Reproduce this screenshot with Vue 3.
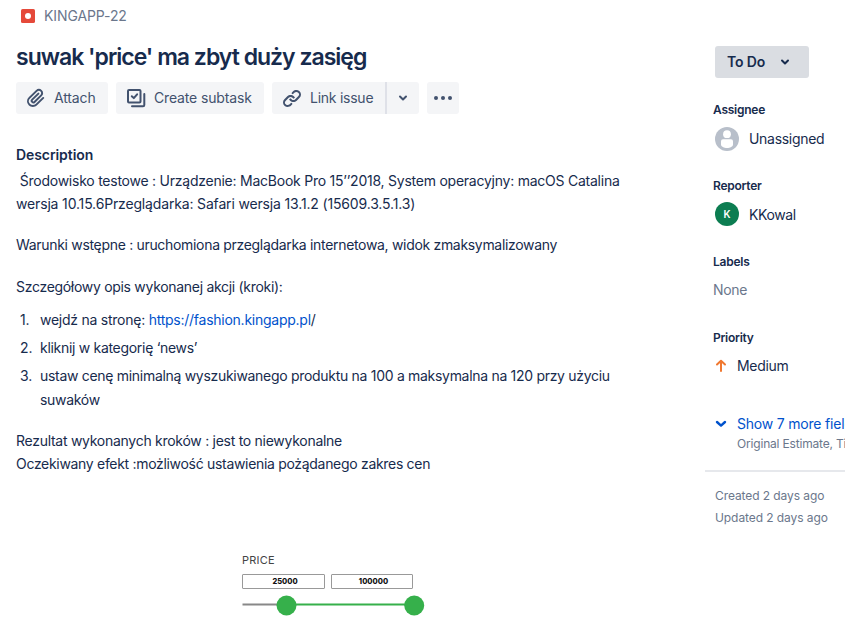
<script setup>
const steps = [
  { text: 'wejdź na stronę: ', link: 'https://fashion.kingapp.pl', tail: '/', cls: 'step-a' },
  { text: 'kliknij w kategorię ‘news’', cls: 'step-b' },
  { text: 'ustaw cenę minimalną wyszukiwanego produktu na 100 a maksymalna na 120 przy użyciu suwaków', cls: 'step-c' },
]
</script>

<template>
  <div class="issue">
    <main class="main">
      <div class="crumb">
        <svg width="14" height="14" viewBox="0 0 14 14"><rect width="14" height="14" rx="1.6" fill="#e5493a" /><circle cx="7" cy="7" r="3" fill="#fff" /></svg>
        <span>KINGAPP-22</span>
      </div>
      <h1>suwak 'price' ma zbyt duży zasięg</h1>
      <div class="toolbar">
        <button class="btn attach">
          <svg width="24" height="24" viewBox="0 0 24 24" fill="#42526e"><path d="M11.643 17.965c-1.53 1.495-4.016 1.496-5.542.004a3.773 3.773 0 0 1 .002-5.412l7.147-6.985a2.316 2.316 0 0 1 3.237.003c.893.873.895 2.282.004 3.153l-6.703 6.55a.653.653 0 0 1-.914-.008.62.62 0 0 1 .001-.902l6.229-6.087a.941.941 0 0 0 0-1.353.995.995 0 0 0-1.384 0l-6.23 6.087a2.502 2.502 0 0 0 .001 3.607 2.643 2.643 0 0 0 3.683.009l6.703-6.55a4.074 4.074 0 0 0-.003-5.859 4.306 4.306 0 0 0-6.002-.003l-7.148 6.985a5.655 5.655 0 0 0-.001 8.118c2.29 2.239 6.015 2.238 8.311-.005l6.91-6.753a.94.94 0 0 0 0-1.353.995.995 0 0 0-1.384 0z" /></svg>
          <span>Attach</span>
        </button>
        <button class="btn subtask">
          <svg width="24" height="24" viewBox="0 0 24 24" fill="none" stroke="#42526e" stroke-width="2" stroke-linecap="round" stroke-linejoin="round"><rect x="4" y="4" width="12.500" height="12.500" rx="1" /><path d="M7.800 10.200l2 1.900 3.300-3.800" /><path d="M20.300 8v11a1.300 1.300 0 0 1-1.300 1.300H8" /></svg>
          <span>Create subtask</span>
        </button>
        <div class="split">
          <button class="btn link-issue">
            <svg width="24" height="24" viewBox="0 0 24 24" fill="#42526e"><path d="M12.856 5.457l-.937.92a1.002 1.002 0 0 0 0 1.437 1.047 1.047 0 0 0 1.463 0l.984-.966c.967-.95 2.542-1.135 3.602-.288a2.54 2.54 0 0 1 .203 3.81l-2.903 2.852a2.646 2.646 0 0 1-3.696 0l-1.11-1.09L9 13.57l1.108 1.089c1.822 1.788 4.802 1.788 6.622 0l2.905-2.852a4.558 4.558 0 0 0-.357-6.82c-1.893-1.517-4.695-1.226-6.422.47" /><path d="M11.144 19.543l.937-.92a1.002 1.002 0 0 0 0-1.437 1.047 1.047 0 0 0-1.462 0l-.985.966c-.967.95-2.542 1.135-3.602.288a2.54 2.54 0 0 1-.203-3.81l2.903-2.852a2.646 2.646 0 0 1 3.696 0l1.11 1.09L15 11.43l-1.108-1.089c-1.822-1.788-4.802-1.788-6.622 0l-2.905 2.852a4.558 4.558 0 0 0 .357 6.82c1.893 1.517 4.695 1.226 6.422-.47" /></svg>
            <span>Link issue</span>
          </button>
          <button class="btn caret"><svg width="10" height="8" viewBox="0 0 10 8" fill="none" stroke="#42526e" stroke-width="2" stroke-linecap="round" stroke-linejoin="round"><path d="M2 2.500l3 3 3-3" /></svg></button>
        </div>
        <button class="btn more"><svg width="20" height="6" viewBox="0 0 20 6" fill="#42526e"><circle cx="3" cy="3" r="2" /><circle cx="10" cy="3" r="2" /><circle cx="17" cy="3" r="2" /></svg></button>
      </div>

      <h2>Description</h2>
      <div class="desc">
        <p><span class="line-a">&nbsp;Środowisko testowe : Urządzenie: MacBook Pro 15’’2018, System operacyjny: macOS Catalina</span><br><span class="line-b">wersja 10.15.6Przeglądarka: Safari wersja 13.1.2 (15609.3.5.1.3)</span></p>
        <p class="pre">Warunki wstępne : uruchomiona przeglądarka internetowa, widok zmaksymalizowany</p>
        <p class="intro">Szczegółowy opis wykonanej akcji (kroki):</p>
        <ol>
          <li v-for="(s, i) in steps" :key="i">
            <span class="num">{{ i + 1 }}.</span>
            <span :class="s.cls">{{ s.text }}<a v-if="s.link">{{ s.link }}</a>{{ s.tail }}</span>
          </li>
        </ol>
        <p class="result"><span class="line-c">Rezultat wykonanych kroków : jest to niewykonalne</span><br><span class="line-d">Oczekiwany efekt :możliwość ustawienia pożądanego zakres cen</span></p>
      </div>

      <figure class="price">
        <figcaption>PRICE</figcaption>
        <div class="inputs"><span>25000</span><span>100000</span></div>
        <svg width="184" height="22" viewBox="0 0 184 22"><path d="M.5 10.500H45" stroke="#888" stroke-width="2" /><path d="M45 10.500h127" stroke="#36b04b" stroke-width="2" /><circle cx="44.500" cy="11.500" r="10" fill="#36b04b" /><circle cx="172.200" cy="11.500" r="10" fill="#36b04b" /></svg>
      </figure>
    </main>

    <aside class="side">
      <button class="status">
        <span>To Do</span>
        <svg width="10" height="8" viewBox="0 0 10 8" fill="none" stroke="#172b4d" stroke-width="2" stroke-linecap="round" stroke-linejoin="round"><path d="M2 2.500l3 3 3-3" /></svg>
      </button>
      <section class="field">
        <h3>Assignee</h3>
        <div class="value person">
          <svg width="24" height="24" viewBox="0 0 24 24"><circle cx="12" cy="12" r="12" fill="#b8bfca" /><circle cx="12" cy="7.200" r="3.900" fill="#fff" /><path d="M6 14.300a2 2 0 0 1 2-2h8a2 2 0 0 1 2 2v3.200c0 2.300-3 3.500-6 3.500s-6-1.200-6-3.500z" fill="#fff" /></svg>
          <span class="unassigned">Unassigned</span>
        </div>
      </section>
      <section class="field">
        <h3>Reporter</h3>
        <div class="value person"><span class="avatar">K</span><span class="kkowal">KKowal</span></div>
      </section>
      <section class="field">
        <h3>Labels</h3>
        <div class="value none">None</div>
      </section>
      <section class="field">
        <h3>Priority</h3>
        <div class="value priority">
          <svg width="12" height="14" viewBox="0 0 12 14" fill="none" stroke="#f07830" stroke-width="2" stroke-linecap="round" stroke-linejoin="round"><path d="M6 12V2M2 5.500L6 1.700l4 3.800" /></svg>
          <span>Medium</span>
        </div>
      </section>
      <div class="expand">
        <svg width="12" height="10" viewBox="0 0 12 10" fill="none" stroke="#0052cc" stroke-width="2.400" stroke-linecap="round" stroke-linejoin="round"><path d="M2 3l4 3.600L10 3" /></svg>
        <div><div class="show">Show 7 more fields</div><div class="extra">Original Estimate, Time tracking</div></div>
      </div>
      <div class="dates"><div>Created 2 days ago</div><div>Updated 2 days ago</div></div>
    </aside>
  </div>
</template>

<style>
body { margin: 0; background: #fff; overflow: hidden; }
</style>

<style scoped>
.issue { display: grid; grid-template-columns: 705px 140px; width: 845px; height: 628px; overflow: hidden; background: #fff; color: #172b4d; font: 400 14px/20px Inter, "Liberation Sans", sans-serif; letter-spacing: -0.15px; }
svg { display: block; flex: none; }
h1, h2, h3, p, ol, figure { margin: 0; padding: 0; }
button { border: 0; font: inherit; color: inherit; letter-spacing: inherit; }
.main { padding-left: 16px; }
.crumb { display: flex; align-items: center; gap: 9px; height: 32px; padding-left: 5px; color: #6b778c; letter-spacing: -0.1px; }
h1 { margin-top: 11px; font-size: 23px; line-height: 28px; font-weight: 600; letter-spacing: -1px; white-space: nowrap; }
.toolbar { display: flex; gap: 8px; margin-top: 11px; }
.btn { display: flex; align-items: center; height: 32px; padding: 0 0 0 8px; gap: 6px; background: #f4f5f7; border-radius: 3px; color: #42526e; white-space: nowrap; }
.attach { width: 92px; }
.subtask { width: 148px; }
.split { display: flex; }
.link-issue { width: 113px; border-radius: 3px 0 0 3px; letter-spacing: -0.25px; }
.caret { width: 34px; border-left: 2px solid #dfe1e8; border-radius: 0 3px 3px 0; padding: 0; justify-content: center; }
.more { width: 32px; padding: 0; justify-content: center; }
h2 { margin-top: 31px; font-size: 14px; line-height: 20px; font-weight: 600; letter-spacing: -0.08px; }
.desc { margin-top: 4px; line-height: 23px; white-space: nowrap; letter-spacing: -0.3px; }
.line-a { letter-spacing: -0.24px; }
.line-b { letter-spacing: -0.16px; }
.pre { letter-spacing: -0.315px; }
.step-a { letter-spacing: -0.25px; }
.line-c { letter-spacing: -0.275px; }
.line-d { letter-spacing: -0.31px; }
.desc p + p { margin-top: 18px; }
.desc p + .intro { margin-top: 19px; }
ol { margin-top: 10px; list-style: none; }
li { display: flex; line-height: 24px; margin-bottom: 4px; }
li:last-child { width: 610px; white-space: normal; margin-bottom: 0; }
.num { flex: none; box-sizing: border-box; width: 24px; padding-left: 4px; letter-spacing: -0.15px; }
.result { margin-top: 17px; }
a { color: #0052cc; }
.price { width: 184px; margin: 78px 0 0 226px; }
figcaption { font-size: 11px; line-height: 14px; color: #444; letter-spacing: 0.2px; }
.inputs { display: flex; gap: 6px; margin-top: 7px; }
.inputs span { box-sizing: border-box; width: 83px; height: 15px; border: 1px solid #999; border-radius: 1px; text-align: center; font-size: 7.500px; line-height: 13px; font-weight: 800; letter-spacing: 0; color: #111; padding-left: 3px; }
.inputs span + span { width: 82px; }
.price svg { margin-top: 5px; }
.side { padding-top: 46px; white-space: nowrap; overflow: hidden; }
.status { display: flex; align-items: center; gap: 15px; width: 94px; height: 32px; margin-left: 10px; padding: 0 12px; background: #dadde2; border-radius: 3px; font-weight: 600; }
.field { padding-left: 8px; height: 76px; }
.status + .field { margin-top: 22px; }
h3 { font-size: 12px; line-height: 20px; font-weight: 600; letter-spacing: -0.25px; }
.value { display: flex; align-items: center; height: 24px; margin-top: 6px; }
.person { gap: 10px; padding-left: 2px; margin-top: 7px; }
.unassigned { letter-spacing: -0.3px; }
.kkowal { letter-spacing: -0.4px; }
.avatar { width: 24px; height: 24px; margin-bottom: 2px; border-radius: 50%; background: #0c7d51; color: #fff; font-size: 10px; line-height: 24px; text-align: center; font-weight: 600; }
.none { color: #6b778c; letter-spacing: -0.3px; }
.priority { gap: 10px; padding-left: 2px; letter-spacing: -0.3px; }
.expand { display: flex; gap: 10px; padding: 10px 0 0 10px; height: 68px; border-bottom: 2px solid #e6e8ec; box-sizing: border-box; }
.expand svg { margin-top: 5px; }
.show { color: #0052cc; letter-spacing: -0.2px; }
.extra { color: #6b778c; font-size: 12px; line-height: 20px; letter-spacing: -0.18px; }
.dates { padding: 13px 0 0 10px; color: #6b778c; font-size: 12px; line-height: 22px; letter-spacing: -0.08px; }
</style>
